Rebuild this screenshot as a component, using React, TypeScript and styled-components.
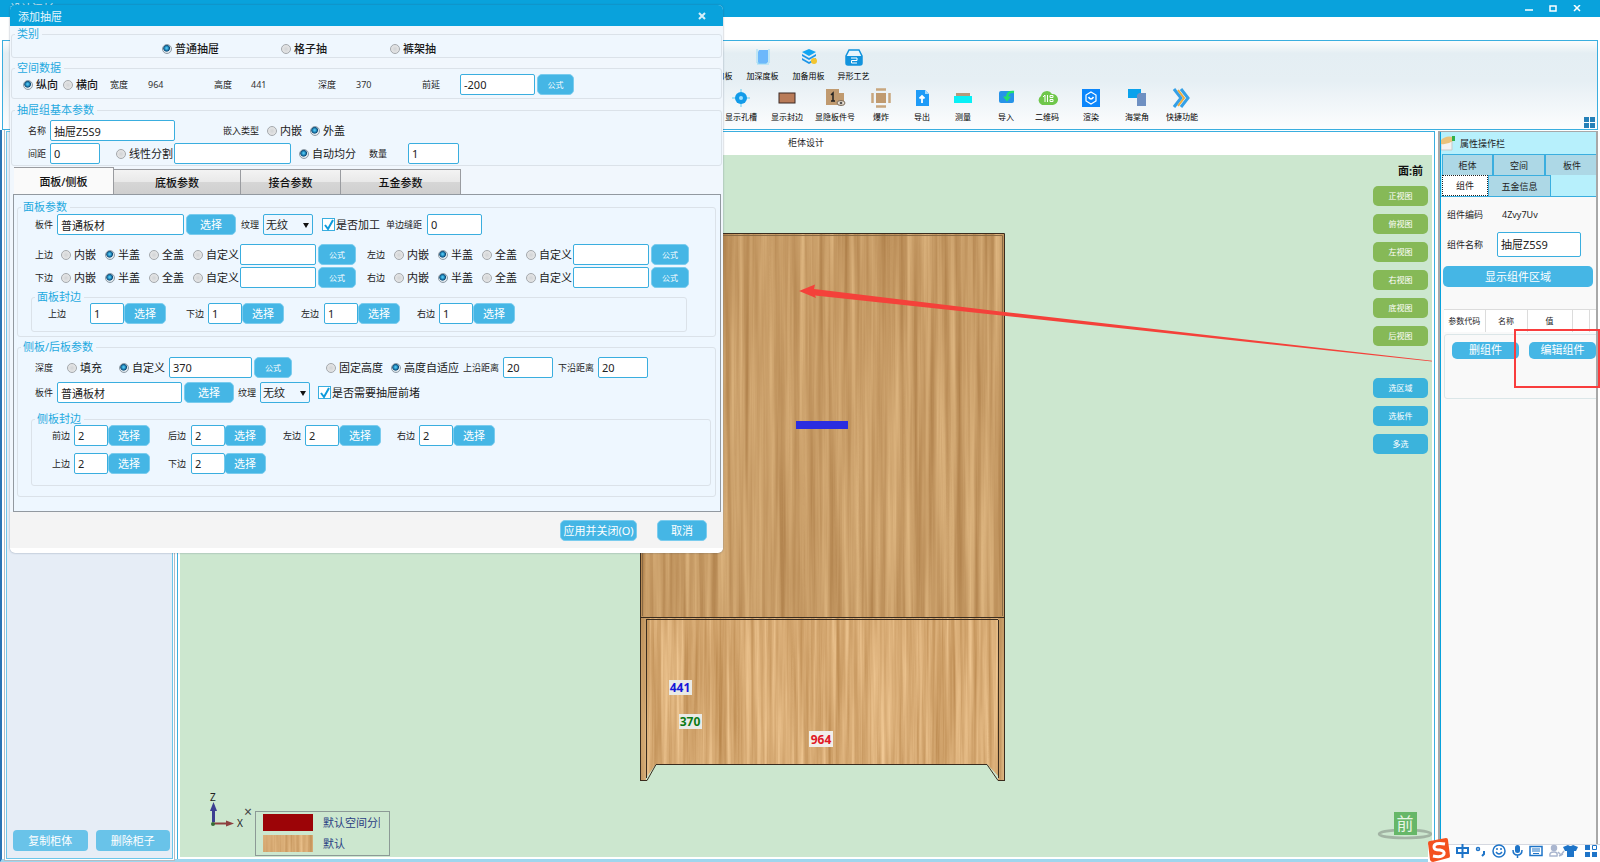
import React, { useState } from 'react';
import styled, { createGlobalStyle, css } from 'styled-components';

const sans = '"Noto Sans", "Noto Sans CJK SC", sans-serif';
const c = {
  brand: '#09a2dc',
  line: '#3aaedf',
  button: '#45b6e5',
  legend: '#1fa9e0',
  canvas: '#cce7cf',
};

const Global = createGlobalStyle`
  *, *::before, *::after { box-sizing: border-box; }
  body { margin: 0; background: #2a74b5; font-family: ${sans}; color: #1d1d1f; overflow: hidden; }
  button, input, select { font-family: inherit; margin: 0; }
`;

/* ---------- application frame ---------- */

const Frame = styled.div`
  position: relative;
  min-height: 100vh;
  display: flex;
  flex-direction: column;
  background: #fff;
`;

const TitleBar = styled.header`
  height: 17px;
  flex: none;
  display: flex;
  justify-content: space-between;
  background: ${c.brand};
  color: #d8f1fb;
  font-size: 11px;
  line-height: 17px;
  padding: 0 15px 0 10px;
  overflow: hidden;
`;

const WindowButtons = styled.div`
  display: flex;
  gap: 8px;
  align-items: center;
`;

const IconButton = styled.button`
  border: 0;
  padding: 0;
  background: none;
  color: inherit;
  display: flex;
  align-items: center;
  justify-content: center;
  width: 16px;
  height: 16px;
`;

const MenuStrip = styled.div`
  height: 23px;
  flex: none;
  background: #fff;
`;

const Toolbar = styled.div`
  position: relative;
  flex: none;
  margin: 0 2px;
  height: 90px;
  border: 1px solid ${c.line};
  background: linear-gradient(#fbfcfc, #e4eef3 14%, #e6eff4 45%, #fcfdfe);
  overflow: hidden;
`;

const ToolRow = styled.div<{ $cols: string; $start: number }>`
  display: grid;
  grid-template-columns: ${(p) => p.$cols};
  padding-left: ${(p) => p.$start}px;
  padding-top: 5px;
`;

const ToolButton = styled.button`
  border: 0;
  padding: 0;
  background: none;
  display: flex;
  flex-direction: column;
  align-items: center;
  justify-content: flex-start;
  height: 36px;
  font-size: 8px;
  line-height: 12px;
  color: #000;
  white-space: nowrap;
  svg { flex: none; height: 22px; width: 22px; margin-bottom: 2px; }
`;

const GridCorner = styled.div`
  position: absolute;
  right: 2px;
  bottom: 1px;
  display: flex;
`;

const Workspace = styled.main`
  flex: 1;
  display: flex;
  min-height: 0;
  padding-top: 1px;
  border-bottom: 3px solid #9fd6ee;
  border-left: 2px solid #2a74b5;
`;

const LeftPanel = styled.aside`
  width: 167px;
  flex: none;
  background: #e6edf6;
  border: solid #6cc6ea;
  border-width: 1px 1px 1px 1px;
  box-shadow: 0 0 0 1px #fff, 0 0 0 2px #b4bcc4;
  margin: 0 4px 0 4px;
  display: flex;
  align-items: flex-end;
  gap: 8px;
  padding: 0 2px 7px 6px;
`;

const PanelButton = styled.button`
  flex: 1;
  height: 21px;
  border: 0;
  border-radius: 4px;
  background: #69c3e9;
  color: #fff;
  font-size: 11px;
  line-height: 21px;
  padding: 0;
`;

const View = styled.section`
  flex: 1;
  min-width: 0;
  display: flex;
  flex-direction: column;
  border: solid ${c.line};
  border-width: 1px 1px 0 1px;
  margin-right: 3px;
`;

const ViewTab = styled.h1`
  margin: 0;
  height: 23px;
  font-size: 9px;
  font-weight: 400;
  line-height: 22px;
  text-align: center;
`;

const Canvas = styled.div`
  position: relative;
  flex: 1;
  margin: 0 2px 2px;
  background: ${c.canvas};
`;

const Scene = styled.svg`
  position: absolute;
  inset: 0;
  width: 100%;
  height: 100%;
`;

const ViewButtons = styled.div`
  position: absolute;
  top: 9px;
  right: 4px;
  width: 55px;
  display: grid;
  gap: 8px;
  justify-items: end;
`;

const FaceLabel = styled.strong`
  font-size: 11px;
  line-height: 14px;
  padding-right: 5px;
  color: #111;
`;

const ViewButton = styled.button<{ $blue?: boolean; $first?: boolean }>`
  width: 55px;
  height: 20px;
  border: 0;
  border-radius: 5px;
  padding: 0;
  color: #fff;
  font-size: 8px;
  line-height: 20px;
  background: ${(p) => (p.$blue ? '#3bb3dc' : '#86b957')};
  margin-top: ${(p) => (p.$first ? 24 : 0)}px;
`;

const MaterialBox = styled.div`
  position: absolute;
  left: 75px;
  bottom: 1px;
  width: 135px;
  height: 45px;
  border: 1px solid #8c9a96;
  display: grid;
  grid-template-columns: 60px 1fr;
  grid-template-rows: 21px 21px;
  align-items: center;
  padding: 0 9px 0 7px;
  font-size: 11px;
  line-height: 20px;
  color: #2b3f83;
  svg { display: block; }
  span { overflow: hidden; white-space: nowrap; }
`;

const MaterialClose = styled.button`
  position: absolute;
  left: 64px;
  bottom: 38px;
  border: 0;
  padding: 0;
  background: none;
  color: #444;
  font-size: 14px;
  line-height: 14px;
`;

/* ---------- property panel ---------- */

const Side = styled.aside`
  width: 160px;
  flex: none;
  display: flex;
  flex-direction: column;
  border: 2px solid #a8a8a8;
  border-top-width: 1px;
  background: #f9f9f9;
  margin-right: 2px;
  padding-bottom: 17px;
`;

const SideInner = styled.div`
  flex: 1;
  border-left: 1px solid ${c.brand};
  display: flex;
  flex-direction: column;
  overflow: hidden;
`;

const SideTitle = styled.h2`
  margin: 0;
  height: 22px;
  background: #b7f0fc;
  display: flex;
  gap: 4px;
  align-items: center;
  font-size: 9px;
  font-weight: 400;
`;

const SideTabs = styled.div<{ $cols: string; $last?: boolean }>`
  display: grid;
  grid-template-columns: ${(p) => p.$cols};
  background: #b7f0fc;
  padding-left: 1px;
  border-bottom: ${(p) => (p.$last ? `1px solid ${c.line}` : '0')};
`;

const SideTab = styled.button<{ $on?: boolean }>`
  height: 21px;
  padding: 0;
  font-size: 9px;
  border: solid ${c.line};
  border-width: 1px 1px 0 1px;
  color: #222;
  background: #add8e6;
  ${(p) =>
    p.$on &&
    css`
      background: #fff;
      border: 1px dotted #222;
    `}
`;

const SideBody = styled.div`
  padding: 7px 3px 0 2px;
  display: flex;
  flex-direction: column;
`;

const Field = styled.div<{ $h: number }>`
  display: grid;
  grid-template-columns: 50px 84px;
  padding-left: 4px;
  height: ${(p) => p.$h}px;
  align-items: center;
  font-size: 9px;
  output { padding-left: 5px; }
`;

const WideButton = styled.button`
  height: 21px;
  border: 0;
  border-radius: 5px;
  margin-top: 2px;
  background: ${c.button};
  color: #fff;
  font-size: 11px;
  line-height: 21px;
  padding: 0;
`;

const ParamTable = styled.table`
  margin: 22px 0 0 1px;
  width: 152px;
  table-layout: fixed;
  border-collapse: collapse;
  background: #fff;
  th {
    height: 22px;
    padding: 0;
    font-size: 8px;
    font-weight: 400;
    border: solid #dcdcdc;
    border-width: 1px 1px 0 0;
    white-space: nowrap;
  }
`;

const ActionGroup = styled.div`
  margin: 2px 0 0 1px;
  width: 160px;
  height: 65px;
  border: 1px solid #dbe6e8;
  border-radius: 3px;
  display: flex;
  align-items: flex-start;
  gap: 10px;
  padding: 7px;
`;

const ActionButton = styled(WideButton)`
  width: 67px;
  flex: none;
  height: 17px;
  line-height: 16px;
  margin: 0;
`;

const RedMark = styled.div`
  position: absolute;
  right: 0;
  top: 329px;
  width: 86px;
  height: 59px;
  border: 2px solid #f93d3d;
`;

const InputBar = styled.div`
  position: absolute;
  right: 0;
  bottom: 0;
  height: 18px;
  width: 172px;
  background: #fff;
  border-top: 1px solid #d5d8e0;
  svg { position: absolute; right: 0; bottom: -2px; }
`;

/* ---------- drawer dialog ---------- */

const Dialog = styled.form`
  position: absolute;
  left: 10px;
  top: 5px;
  width: 713px;
  background: #f1f7fd;
  border-radius: 5px;
  border-bottom: 5px solid #fff;
  box-shadow: 0 0 2px rgba(60, 80, 110, 0.55);
`;

const DialogTitle = styled.div`
  height: 21px;
  border-radius: 5px 5px 0 0;
  background: ${c.brand};
  color: #e6f6fd;
  display: flex;
  justify-content: space-between;
  align-items: center;
  padding: 1px 13px 0 8px;
  font-size: 11px;
`;

const DialogBody = styled.div`
  padding: 2px 1px 0;
`;

const Group = styled.fieldset<{ $gap?: number; $bottom?: number; $side?: number; $right?: number }>`
  min-width: 0;
  margin: ${(p) => p.$gap ?? 0}px ${(p) => p.$right ?? p.$side ?? 0}px 0 ${(p) => p.$side ?? 0}px;
  padding: 0 0 ${(p) => p.$bottom ?? 0}px;
  border: 1px solid #dbe2e9;
  border-radius: 3px;
  background: rgba(238, 247, 255, 0.6);
  legend {
    margin-left: 3px;
    padding: 0 3px 0 2px;
    font-size: 11px;
    line-height: 12px;
    height: 12px;
    color: ${c.legend};
  }
`;

const Row = styled.div<{ $cols: string; $pad: number; $top?: number; $h?: number }>`
  display: grid;
  grid-template-columns: ${(p) => p.$cols};
  align-items: center;
  height: ${(p) => p.$h ?? 21}px;
  padding-left: ${(p) => p.$pad}px;
  margin-top: ${(p) => p.$top ?? 0}px;
`;

const Small = styled.label`
  font-size: 9px;
  line-height: 12px;
  white-space: nowrap;
  color: #222;
`;

const Value = styled.output`
  font-size: 9px;
  line-height: 12px;
  color: #333;
`;

const TextBox = styled.input<{ $w: number; $h?: number }>`
  width: ${(p) => p.$w}px;
  height: ${(p) => p.$h ?? 21}px;
  border: 1px solid ${c.line};
  border-radius: 2px;
  background: #fff;
  padding: 0 3px;
  font-size: 11px;
  line-height: 16px;
  color: #222;
  outline: 0;
`;

const Btn = styled.button<{ $w: number; $small?: boolean }>`
  width: ${(p) => p.$w}px;
  height: 21px;
  border: 1px solid #7accee;
  border-radius: 5px;
  background: ${c.button};
  color: #fff;
  padding: 0;
  font-size: ${(p) => (p.$small ? 8 : 11)}px;
  line-height: 18px;
  white-space: nowrap;
`;

const SelectWrap = styled.span`
  position: relative;
  width: 50px;
  height: 21px;
  display: block;
  svg { position: absolute; right: 4px; top: 9px; pointer-events: none; }
`;

const Select = styled.select`
  appearance: none;
  display: block;
  width: 50px;
  height: 21px;
  border: 1px solid ${c.line};
  border-radius: 2px;
  background: #eef7ff;
  font-size: 11px;
  padding: 0 2px;
  color: #222;
`;

const Choice = styled.label<{ $bold?: boolean }>`
  display: flex;
  align-items: center;
  gap: 3px;
  font-size: 11px;
  line-height: 16px;
  white-space: nowrap;
  color: #1a1a1a;
  font-weight: ${(p) => (p.$bold ? 500 : 400)};
  input[type='radio'] {
    appearance: none;
    flex: none;
    width: 10px;
    height: 10px;
    border-radius: 50%;
    border: 1px solid #a4a8ac;
    background: radial-gradient(#d2d4d6, #ededed);
  }
  input[type='radio']:checked {
    border-color: #8e9ba5;
    background: radial-gradient(circle at 45% 40%, #4cc3f0 0 10%, #146a9c 38%, #0d4c78 46%, #dfe8ee 58%);
  }
`;

const CheckChoice = styled(Choice)`
  gap: 1px;
  input {
    appearance: none;
    flex: none;
    width: 13px;
    height: 13px;
    border: 1px solid ${c.line};
    background: #fff;
  }
  position: relative;
  svg { position: absolute; left: 1px; top: 1px; pointer-events: none; }
`;

const Tabs = styled.div`
  display: flex;
  align-items: flex-end;
  height: 28px;
  padding-left: 3px;
`;

const Tab = styled.button<{ $w: number; $on?: boolean }>`
  width: ${(p) => p.$w}px;
  height: ${(p) => (p.$on ? 27 : 25)}px;
  padding: 0;
  font-size: 11px;
  font-weight: 500;
  color: #111;
  border: solid #9a9ca0;
  border-width: 1px 1px 0 0;
  background: ${(p) => (p.$on ? '#fafafa' : 'linear-gradient(#f3f3f3, #e9e9e9 48%, #d6d6d6 52%, #cfcfcf)')};
`;

const TabPanel = styled.div`
  margin: 0 1px 0 2px;
  padding: 6px 4px 14px 3px;
  border: 1px solid #9299a0;
  background: #eef7ff;
`;

const DialogFooter = styled.div`
  display: flex;
  justify-content: flex-end;
  gap: 20px;
  height: 36px;
  padding: 8px 16px 0;
  background: #f4f4f4;
`;

/* ---------- small pieces ---------- */

function Radio({ name, text, on, bold }: { name: string; text: string; on?: boolean; bold?: boolean }) {
  return (
    <Choice $bold={bold}>
      <input type="radio" name={name} defaultChecked={on} />
      {text}
    </Choice>
  );
}

function Check({ text }: { text: string }) {
  const [on, setOn] = useState(true);
  return (
    <CheckChoice>
      <input type="checkbox" checked={on} onChange={() => setOn(!on)} />
      {on && (
        <svg width="12" height="14" viewBox="0 0 12 14">
          <path d="M2 7l3 4 5-9" fill="none" stroke="#0d9bdc" strokeWidth="2" />
        </svg>
      )}
      {text}
    </CheckChoice>
  );
}

function Grain({ id }: { id: string }) {
  return (
    <SelectWrap>
      <Select id={id} defaultValue="无纹">
        <option>无纹</option>
        <option>横纹</option>
        <option>竖纹</option>
      </Select>
      <svg width="6" height="5" viewBox="0 0 6 5">
        <path d="M0 0h6L3 5z" fill="#111" />
      </svg>
    </SelectWrap>
  );
}

function Edge({ id, label, value }: { id: string; label: string; value: string }) {
  return (
    <>
      <Small htmlFor={id}>{label}</Small>
      <TextBox id={id} $w={34} defaultValue={value} />
      <Btn type="button" $w={42}>选择</Btn>
    </>
  );
}

function CoverRule({ id, label }: { id: string; label: string }) {
  return (
    <>
      <Small htmlFor={id}>{label}</Small>
      <Radio name={id} text="内嵌" />
      <Radio name={id} text="半盖" on />
      <Radio name={id} text="全盖" />
      <Radio name={id} text="自定义" />
      <TextBox id={id} $w={76} />
      <Btn type="button" $w={38} $small>公式</Btn>
    </>
  );
}

const coverCols = '26px 44px 44px 44px 47px 78px 49px 27px 44px 44px 44px 47px 78px 38px';
const frontEdgeCols = '42px 34px 62px 22px 34px 59px 23px 34px 59px 22px 34px 42px';
const sideEdgeCols = '22px 34px 60px 23px 33px 59px 22px 34px 58px 22px 34px 41px';

function DrawerDialog() {
  return (
    <Dialog onSubmit={(e) => e.preventDefault()}>
      <DialogTitle>
        添加抽屉
        <IconButton type="button" aria-label="关闭">
          <svg width="8" height="8" viewBox="0 0 8 8">
            <path d="M1 1l6 6M7 1L1 7" stroke="#d6effa" strokeWidth="2" />
          </svg>
        </IconButton>
      </DialogTitle>
      <DialogBody>
        <Group>
          <legend>类别</legend>
          <Row $h={17} $pad={150} $cols="119px 109px auto">
            <Radio name="kind" text="普通抽屉" on bold />
            <Radio name="kind" text="格子抽" bold />
            <Radio name="kind" text="裤架抽" bold />
          </Row>
        </Group>
        <Group $gap={4} $bottom={3}>
          <legend>空间数据</legend>
          <Row $pad={11} $cols="40px 47px 38px 66px 37px 67px 38px 66px 38px 77px 37px">
            <Radio name="dir" text="纵向" on bold />
            <Radio name="dir" text="横向" bold />
            <Small as="span">宽度</Small>
            <Value>964</Value>
            <Small as="span">高度</Small>
            <Value>441</Value>
            <Small as="span">深度</Small>
            <Value>370</Value>
            <Small htmlFor="front">前延</Small>
            <TextBox id="front" $w={75} defaultValue="-200" />
            <Btn type="button" $w={37} $small>公式</Btn>
          </Row>
        </Group>
        <Group $gap={5} $bottom={1}>
          <legend>抽屉组基本参数</legend>
          <Row $pad={16} $top={4} $cols="22px 173px 44px 43px auto">
            <Small htmlFor="name">名称</Small>
            <TextBox id="name" $w={125} defaultValue="抽屉Z5S9" />
            <Small as="span">嵌入类型</Small>
            <Radio name="embed" text="内嵌" />
            <Radio name="embed" text="外盖" on />
          </Row>
          <Row $pad={16} $top={2} $cols="22px 66px 58px 125px 70px 39px 51px">
            <Small htmlFor="space">间距</Small>
            <TextBox id="space" $w={50} defaultValue="0" />
            <Radio name="split" text="线性分割" />
            <TextBox aria-label="线性分割" $w={117} />
            <Radio name="split" text="自动均分" on />
            <Small htmlFor="count">数量</Small>
            <TextBox id="count" $w={51} defaultValue="1" />
          </Row>
        </Group>
        <Tabs role="tablist">
          <Tab type="button" role="tab" $w={100} $on>面板/侧板</Tab>
          <Tab type="button" role="tab" $w={127}>底板参数</Tab>
          <Tab type="button" role="tab" $w={100}>接合参数</Tab>
          <Tab type="button" role="tab" $w={120}>五金参数</Tab>
        </Tabs>
        <TabPanel>
          <Group $bottom={4}>
            <legend>面板参数</legend>
            <Row $pad={17} $top={1} $cols="22px 129px 55px 22px 59px 64px 41px 55px">
              <Small htmlFor="front-board">板件</Small>
              <TextBox id="front-board" $w={127} defaultValue="普通板材" />
              <Btn type="button" $w={50}>选择</Btn>
              <Small htmlFor="front-grain">纹理</Small>
              <Grain id="front-grain" />
              <Check text="是否加工" />
              <Small htmlFor="seam">单边缝距</Small>
              <TextBox id="seam" $w={55} defaultValue="0" />
            </Row>
            <Row $pad={17} $top={9} $cols={coverCols}>
              <CoverRule id="cover-top" label="上边" />
              <CoverRule id="cover-left" label="左边" />
            </Row>
            <Row $pad={17} $top={2} $cols={coverCols}>
              <CoverRule id="cover-bottom" label="下边" />
              <CoverRule id="cover-right" label="右边" />
            </Row>
            <Group $gap={3} $side={13} $right={28} $bottom={7}>
              <legend>面板封边</legend>
              <Row $pad={16} $cols={frontEdgeCols}>
                <Edge id="fe-top" label="上边" value="1" />
                <Edge id="fe-bottom" label="下边" value="1" />
                <Edge id="fe-left" label="左边" value="1" />
                <Edge id="fe-right" label="右边" value="1" />
              </Row>
            </Group>
          </Group>
          <Group $gap={4} $bottom={10}>
            <legend>侧板/后板参数</legend>
            <Row $pad={17} $top={4} $cols="32px 52px 50px 85px 72px 65px 72px 40px 55px 40px 50px">
              <Small htmlFor="depth">深度</Small>
              <Radio name="depth" text="填充" />
              <Radio name="depth" text="自定义" on />
              <TextBox id="depth" $w={83} defaultValue="370" />
              <Btn type="button" $w={38} $small>公式</Btn>
              <Radio name="height" text="固定高度" />
              <Radio name="height" text="高度自适应" on />
              <Small htmlFor="gap-top">上沿距离</Small>
              <TextBox id="gap-top" $w={50} defaultValue="20" />
              <Small htmlFor="gap-bottom">下沿距离</Small>
              <TextBox id="gap-bottom" $w={50} defaultValue="20" />
            </Row>
            <Row $pad={17} $top={4} $cols="22px 127px 54px 22px 58px auto">
              <Small htmlFor="side-board">板件</Small>
              <TextBox id="side-board" $w={125} defaultValue="普通板材" />
              <Btn type="button" $w={50}>选择</Btn>
              <Small htmlFor="side-grain">纹理</Small>
              <Grain id="side-grain" />
              <Check text="是否需要抽屉前堵" />
            </Row>
            <Group $gap={10} $side={13} $right={4} $bottom={11}>
              <legend>侧板封边</legend>
              <Row $pad={20} $cols={sideEdgeCols}>
                <Edge id="se-front" label="前边" value="2" />
                <Edge id="se-back" label="后边" value="2" />
                <Edge id="se-left" label="左边" value="2" />
                <Edge id="se-right" label="右边" value="2" />
              </Row>
              <Row $pad={20} $top={7} $cols={sideEdgeCols}>
                <Edge id="se-top" label="上边" value="2" />
                <Edge id="se-bottom" label="下边" value="2" />
              </Row>
            </Group>
          </Group>
        </TabPanel>
      </DialogBody>
      <DialogFooter>
        <Btn type="submit" $w={77}>应用并关闭(O)</Btn>
        <Btn type="button" $w={50}>取消</Btn>
      </DialogFooter>
    </Dialog>
  );
}

/* ---------- toolbar icons, 22 x 22 ---------- */

const icons: Record<string, React.ReactNode> = {
  层: <rect x="5" y="4" width="12" height="12" fill="#6bb6f7" />,
  深: (
    <g>
      <path d="M7 4h9v12l-2 2H6V6z" fill="#6cb8fb" />
      <path d="M5 3v14h2M17 3v14M5 18h12" stroke="#9adcf5" fill="none" />
    </g>
  ),
  备: (
    <g>
      <path d="M11 3l7 3-7 4-7-4z" fill="#12a5f2" />
      <path d="M4 8l7 4 7-4v2l-7 4-7-4zM4 12l7 4 7-4v2l-7 4-7-4z" fill="#1c95e8" />
      <circle cx="16" cy="15" r="3" fill="#f2c531" />
    </g>
  ),
  异: (
    <g>
      <path d="M6 4h10l3 6v7q0 2-2 2H5q-2 0-2-2v-7z" fill="#e9f5fc" stroke="#1193dd" strokeWidth="1.500" />
      <path d="M3 10h16v7q0 2-2 2H5q-2 0-2-2z" fill="#1193dd" />
      <path d="M8 12h6v2.500H8.500V17H14" stroke="#fff" fill="none" />
    </g>
  ),
  孔: (
    <g>
      <path d="M11 2v18M2 11h18" stroke="#5ecbf0" />
      <circle cx="11" cy="11" r="6" fill="#129be9" />
      <circle cx="11" cy="11" r="2" fill="#9fe0ff" />
    </g>
  ),
  封: <rect x="3" y="6" width="16" height="10" fill="#b97b58" stroke="#3d2a24" />,
  隐: (
    <g>
      <path d="M2 2h13v4h5v12H2z" fill="#c09a6f" />
      <path d="M7 8l2-2v8M7 14h4" fill="none" stroke="#222" strokeWidth="1.500" />
      <ellipse cx="17" cy="16" rx="4" ry="2.500" fill="#e7ddd0" stroke="#7a6a58" />
      <circle cx="17" cy="16" r="1.300" fill="#555" />
    </g>
  ),
  爆: (
    <g>
      <rect x="6" y="6" width="10" height="10" fill="#c09a6f" />
      <path d="M6 2.500h10M6 19.500h10M2.500 6v10M19.500 6v10" stroke="#c8a67e" strokeWidth="2.500" />
    </g>
  ),
  出: (
    <g>
      <path d="M5 3h9l4 4v12H5z" fill="#1e9bf7" />
      <path d="M14 3v4h4z" fill="#a8dafd" />
      <path d="M11 16V9M8.500 11.500L11 9l2.500 2.500" fill="none" stroke="#fff" strokeWidth="1.800" />
    </g>
  ),
  测: (
    <g>
      <rect x="4" y="6" width="14" height="4" fill="#b59a7c" />
      <rect x="2" y="9" width="18" height="7" fill="#08f0f6" />
    </g>
  ),
  入: (
    <g>
      <rect x="4" y="4" width="15" height="12" rx="2" fill="#2693e8" />
      <path d="M19 5q-7-1-7 6" fill="none" stroke="#22e06d" strokeWidth="2.500" />
      <path d="M8 9.500h8l-4 5z" fill="#22e06d" />
    </g>
  ),
  码: (
    <g>
      <path d="M6 18a5 5 0 01-1-9 6 6 0 0111-2 5.500 5.500 0 011 11z" fill="#6fc74b" />
      <path d="M7 10l2-2v7M11.500 8v7M14 8.500h3v2h-3zM14 12.500h3v2h-3z" stroke="#fff" fill="none" />
    </g>
  ),
  渲: (
    <g>
      <rect x="2" y="2" width="18" height="18" fill="#0c86fb" />
      <path d="M11 5l5 3v6l-5 3-5-3V8z" stroke="#fff" fill="none" strokeWidth="1.200" />
      <path d="M8.500 10q2.500 4 5 0" stroke="#fff" fill="none" strokeWidth="1.500" />
    </g>
  ),
  角: (
    <g>
      <rect x="2" y="2" width="13" height="9" fill="#0aa2ec" />
      <path d="M11 8l2-2h7v13h-9z" fill="#6e90c2" />
    </g>
  ),
  快: (
    <g fill="none" strokeWidth="3">
      <path d="M3 2l7 9-7 9M10 2l7 9-7 9" stroke="#35a0e6" />
      <path d="M7 3l6 8-6 8" stroke="#efad3c" strokeWidth="2" />
    </g>
  ),
};

function Tool({ icon, text }: { icon: string; text: string }) {
  return (
    <ToolButton type="button">
      <svg viewBox="0 0 22 22">{icons[icon]}</svg>
      {text}
    </ToolButton>
  );
}

const bottomTools: [string, string][] = [
  ['孔', '显示孔槽'], ['封', '显示封边'], ['隐', '显隐板件号'], ['爆', '爆炸'], ['出', '导出'], ['测', '测量'],
  ['入', '导入'], ['码', '二维码'], ['渲', '渲染'], ['角', '海棠角'], ['快', '快捷功能'],
];

/* ---------- cabinet drawing ---------- */

function CabinetScene() {
  return (
    <Scene viewBox="180 155 1252 702" preserveAspectRatio="xMidYMid meet" fontFamily={sans}>
      <defs>
        <filter id="wood" x="0" y="0" width="1" height="1" colorInterpolationFilters="sRGB">
          <feTurbulence type="fractalNoise" baseFrequency="0.16 0.003" numOctaves="4" seed="7" result="n" />
          <feColorMatrix
            in="n"
            type="matrix"
            values="0.280 0 0 0 0.640  0.320 0 0 0 0.450  0.320 0 0 0 0.240  0 0 0 0 1"
          />
          <feComposite in2="SourceGraphic" operator="in" />
        </filter>
        <filter id="woodLight" x="0" y="0" width="1" height="1" colorInterpolationFilters="sRGB">
          <feTurbulence type="fractalNoise" baseFrequency="0.22 0.005" numOctaves="4" seed="19" result="n" />
          <feColorMatrix
            in="n"
            type="matrix"
            values="0.280 0 0 0 0.700  0.330 0 0 0 0.500  0.360 0 0 0 0.270  0 0 0 0 1"
          />
          <feComposite in2="SourceGraphic" operator="in" />
        </filter>
      </defs>

      <rect x="640" y="233" width="364" height="385" filter="url(#wood)" />
      <rect x="640" y="618" width="6" height="163" filter="url(#wood)" />
      <rect x="998" y="618" width="6" height="163" filter="url(#wood)" />
      <path d="M646 618H998V776L987 764H656L646 778Z" filter="url(#woodLight)" />
      <g fill="none" stroke="#3a2c1e">
        <path d="M640.500 781V233.500H1004.500V781" />
        <path d="M642.500 616V235.500H1002.500V616" stroke="#8a6a44" />
        <path d="M640 617.500H1004M646 619.500H998" />
        <path d="M646.500 620V778M998.500 620V778M640 780.500H647L656 764.500H987L998 780.500H1004" />
      </g>
      <rect x="796" y="421" width="52" height="8" fill="#2b2de0" />

      <path d="M1432 361.500L815 295.500L816 298L799 291L815 284.500L814 289L1000 311.500L1432 360.800Z" fill="#f4413a" />

      <g fontSize="12" fontWeight="700" textAnchor="middle">
        <rect x="669" y="680" width="23" height="15" fill="#e9eae6" />
        <text x="680" y="692" fill="#1616d8">441</text>
        <rect x="679" y="714" width="23" height="15" fill="#e9eae6" />
        <text x="690" y="726" fill="#0b7a14">370</text>
        <rect x="809" y="731" width="24" height="16" fill="#f1efeb" />
        <text x="821" y="744" fill="#e01926">964</text>
      </g>

      <path d="M213.500 822V810" stroke="#3c3e92" strokeWidth="3" />
      <path d="M210 811L213.500 802L217 811Z" fill="#3c3e92" />
      <path d="M214 823.500H227" stroke="#8d3f3f" strokeWidth="2" />
      <path d="M226 820.500L234 823.500L226 826.500Z" fill="#8d3f3f" />
      <circle cx="213" cy="824" r="2" fill="#356b35" />
      <g fontSize="10" fill="#222">
        <text x="210" y="801">Z</text>
        <text x="237" y="827">X</text>
      </g>

      <ellipse cx="1405" cy="834" rx="26" ry="4" fill="none" stroke="#a2b4a4" strokeWidth="2.500" />
      <rect x="1394" y="812" width="23" height="23" fill="#66b768" />
      <text x="1405" y="830" fontSize="17" fill="#e6f5e4" textAnchor="middle">前</text>
    </Scene>
  );
}

function ImeIcons() {
  return (
    <InputBar>
      <svg width="172" height="26" viewBox="0 0 172 26">
        <path d="M0 5q0-2 2-2L18 0q2 0 2 2l2 16q0 2-2 2L5 24q-2 0-3-2z" fill="#f4511e" />
        <path d="M17 6Q6 4 6 9q0 3 6 3 5 1 4 4-2 4-11 2" fill="none" stroke="#fff" strokeWidth="3" />
        <g fill="none" stroke="#1e74c8" strokeWidth="1.500">
          <path d="M29 10h11v5H29zM34.500 6v14" strokeWidth="2" />
          <circle cx="50" cy="11" r="1.500" />
          <path d="M56 13v3l-2 2" strokeWidth="2" />
          <circle cx="71" cy="13" r="6" />
          <path d="M68 14q3 4 6 0M69 10v2M73 10v2" />
          <path d="M85 12q0 5 4.500 5t4.500-5M89.500 17v3" />
          <rect x="102" y="8.500" width="12" height="9" />
          <path d="M104 11h8M104 13h8M105 15.500h6" strokeWidth="1" />
        </g>
        <rect x="87" y="7" width="5" height="8" rx="2.500" fill="#1e74c8" />
        <g fill="none" stroke="#aab6cf" strokeWidth="1.500">
          <circle cx="126" cy="10" r="2.500" fill="#aab6cf" />
          <path d="M122 18q-1-4 4-4 4 0 3 4zM130 14l3 3 3-4M131 18l4-2" />
        </g>
        <path d="M135 9l5-2q2.500 2 5 0l5 2-2 4h-2v6h-7v-6h-2z" fill="#1e74c8" />
        <path d="M157 7h5v5h-5zM157 14h5v5h-5zM164 14h5v5h-5z" fill="#1e74c8" />
        <path d="M164.500 7.500h4v4h-4z" fill="none" stroke="#1e74c8" />
      </svg>
    </InputBar>
  );
}

export default function App() {
  return (
    <Frame>
      <Global />
      <TitleBar>
        <span>设计江杉2020218315</span>
        <WindowButtons>
          <IconButton aria-label="最小化">
            <svg width="8" height="8"><path d="M0 5h8" stroke="#fff" strokeWidth="1.500" /></svg>
          </IconButton>
          <IconButton aria-label="最大化">
            <svg width="8" height="8"><rect x="1" y="1" width="6" height="5" fill="none" stroke="#fff" strokeWidth="1.500" /></svg>
          </IconButton>
          <IconButton aria-label="关闭窗口">
            <svg width="8" height="8"><path d="M1 0l6 6M7 0L1 6" stroke="#fff" strokeWidth="1.500" /></svg>
          </IconButton>
        </WindowButtons>
      </TitleBar>
      <MenuStrip />
      <Toolbar>
        <ToolRow $start={691} $cols="45px 47px 45px 45px">
          <Tool icon="层" text="加收口板" />
          <Tool icon="深" text="加深度板" />
          <Tool icon="备" text="加备用板" />
          <Tool icon="异" text="异形工艺" />
        </ToolRow>
        <ToolRow $start={715} $cols="46px 46px 50px 42px 40px 42px 44px 38px 50px 42px 48px">
          {bottomTools.map(([icon, text]) => (
            <Tool key={text} icon={icon} text={text} />
          ))}
        </ToolRow>
        <GridCorner>
          <svg width="11" height="11" viewBox="0 0 11 11">
            <path d="M0 0h5v5H0zM6 0h5v5H6zM0 6h5v5H0zM6 6h5v5H6z" fill="#2580b8" />
          </svg>
        </GridCorner>
      </Toolbar>
      <Workspace>
        <LeftPanel>
          <PanelButton>复制柜体</PanelButton>
          <PanelButton>删除柜子</PanelButton>
        </LeftPanel>
        <View>
          <ViewTab>柜体设计</ViewTab>
          <Canvas>
            <CabinetScene />
            <ViewButtons>
              <FaceLabel>面:前</FaceLabel>
              {['正视图', '俯视图', '左视图', '右视图', '底视图', '后视图'].map((t) => (
                <ViewButton key={t}>{t}</ViewButton>
              ))}
              <ViewButton $blue $first>选区域</ViewButton>
              <ViewButton $blue>选板件</ViewButton>
              <ViewButton $blue>多选</ViewButton>
            </ViewButtons>
            <MaterialClose aria-label="关闭图例">×</MaterialClose>
            <MaterialBox>
              <svg width="50" height="17"><rect width="50" height="17" fill="#9c0407" /></svg>
              <span>默认空间分隔</span>
              <svg width="50" height="17"><rect width="50" height="17" filter="url(#woodLight)" /></svg>
              <span>默认</span>
            </MaterialBox>
          </Canvas>
        </View>
        <Side>
          <SideInner>
            <SideTitle>
              <svg width="15" height="16" viewBox="0 0 15 16">
                <path d="M0 6h11v9H0z" fill="#f2f2f2" stroke="#c9c9c9" />
                <path d="M0 5q5-5 12-3v4Q6 10 0 9z" fill="#e9c27b" />
                <path d="M11 1h3v5h-3z" fill="#2fb04b" />
              </svg>
              属性操作栏
            </SideTitle>
            <SideTabs $cols="51px 52px 54px">
              <SideTab>柜体</SideTab>
              <SideTab>空间</SideTab>
              <SideTab>板件</SideTab>
            </SideTabs>
            <SideTabs $cols="46px 63px" $last>
              <SideTab $on>组件</SideTab>
              <SideTab>五金信息</SideTab>
            </SideTabs>
            <SideBody>
              <Field $h={20}>
                <span>组件编码</span>
                <output>4Zvy7Uv</output>
              </Field>
              <Field $h={40}>
                <label htmlFor="part-name">组件名称</label>
                <TextBox id="part-name" $w={84} $h={25} defaultValue="抽屉Z5S9" />
              </Field>
              <WideButton>显示组件区域</WideButton>
              <ParamTable>
                <colgroup>
                  <col width="41" />
                  <col width="42" />
                  <col width="45" />
                  <col width="17" />
                  <col width="7" />
                </colgroup>
                <thead>
                  <tr><th>参数代码</th><th>名称</th><th>值</th><th /><th /></tr>
                </thead>
              </ParamTable>
              <ActionGroup>
                <ActionButton>删组件</ActionButton>
                <ActionButton>编辑组件</ActionButton>
              </ActionGroup>
            </SideBody>
          </SideInner>
        </Side>
      </Workspace>
      <RedMark />
      <ImeIcons />
      <DrawerDialog />
    </Frame>
  );
}
